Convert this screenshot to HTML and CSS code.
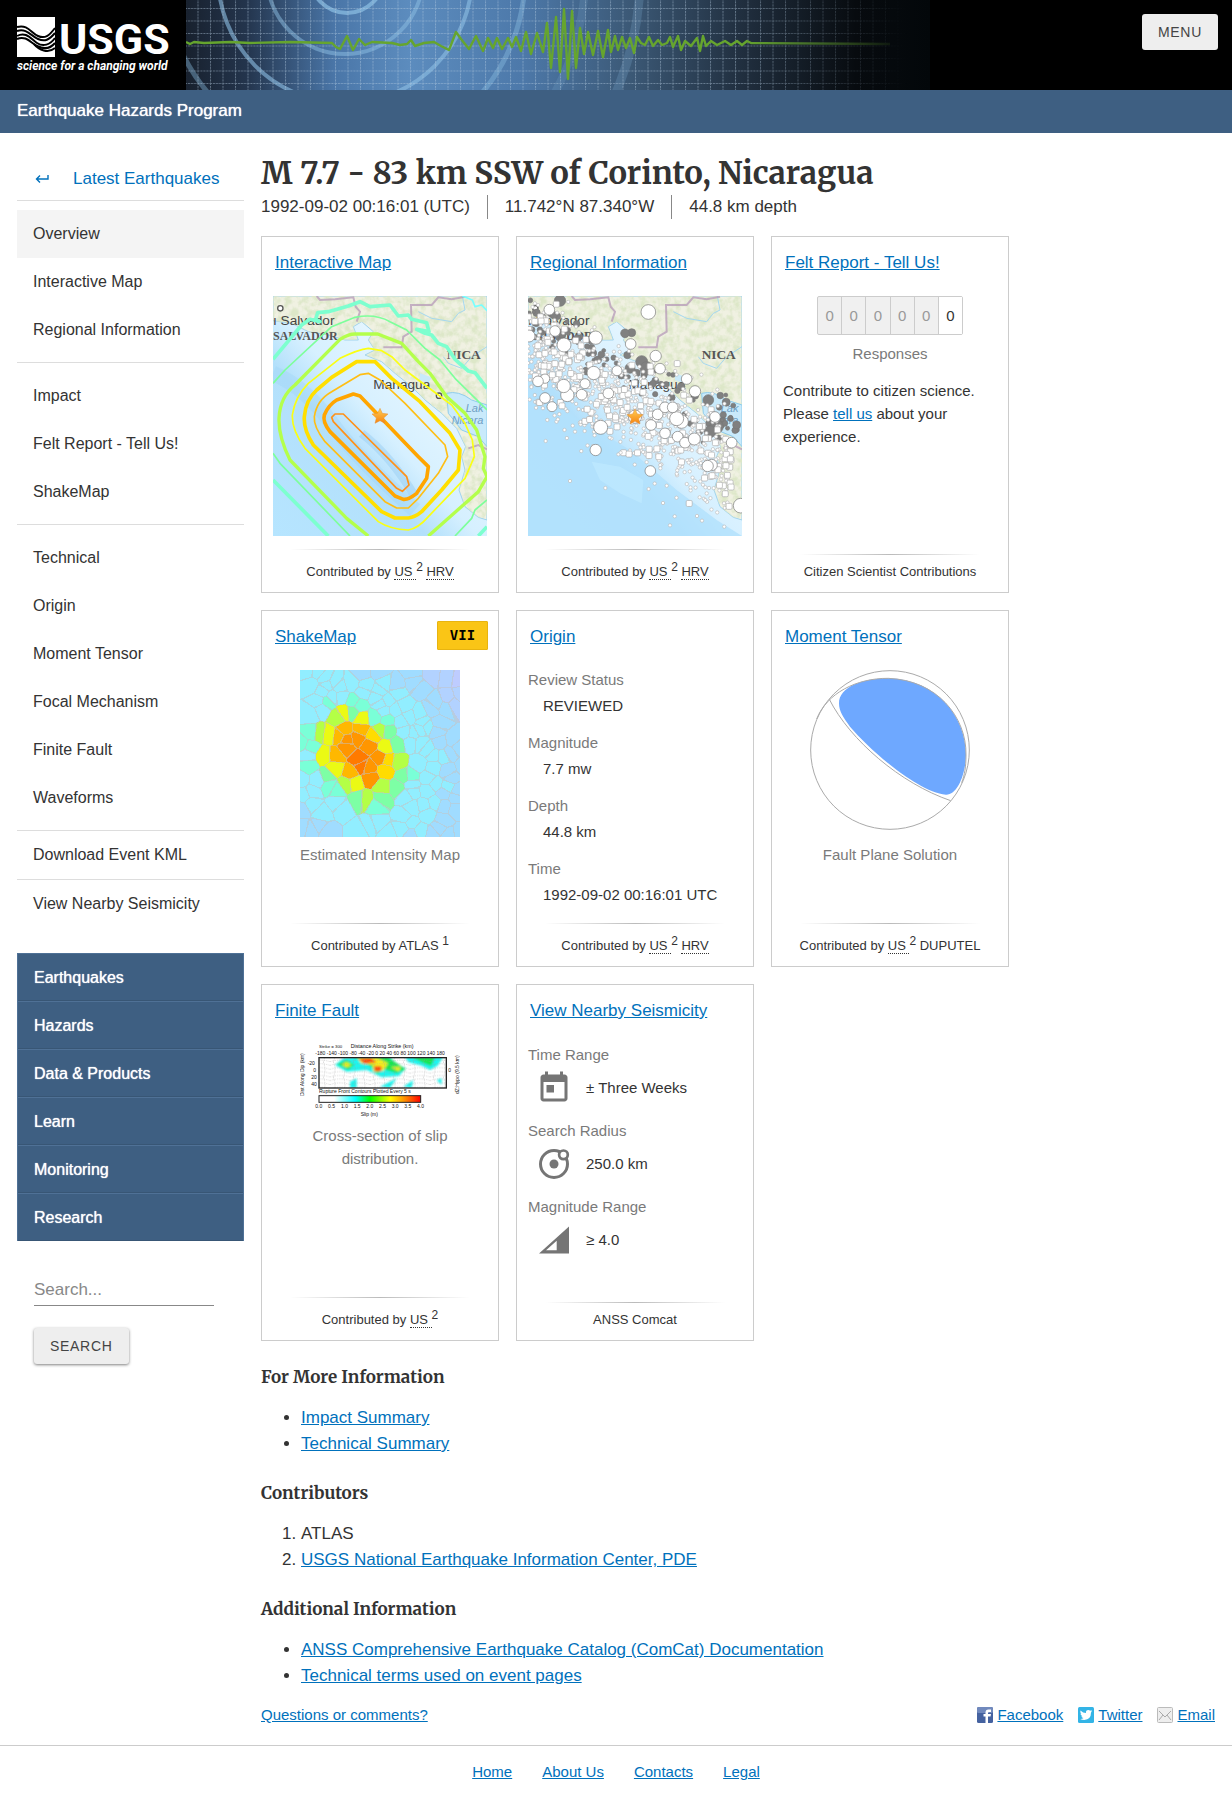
FILE: index.html
```html
<!DOCTYPE html>
<html lang="en">
<head>
    <meta charset="UTF-8">
    <meta name="viewport" content="width=device-width, initial-scale=1.0">
    <title>M 7.7 - 83 km SSW of Corinto, Nicaragua</title>
    <link rel="stylesheet" href="styles.css">
</head>
<body>
    <header class="site-header">
        <a class="logo" href="#" aria-label="USGS home">
            <svg width="186" height="90" viewBox="0 0 186 90">
                <rect x="17" y="17" width="38" height="40" fill="#fff"/>
                <g fill="none" stroke="#000" stroke-width="2">
                    <path d="M17 27C28 24 31 33 38 36S49 36 55 28"/>
                    <path d="M17 31C27 28 31 36 38 39S49 40 55 33"/>
                    <path d="M17 36C26 31 31 39 37 43S50 45 55 38"/>
                    <path d="M17 39C26 35 31 43 37 46S50 49 55 43"/>
                    <path d="M34 44C39 50 48 54 55 48"/>
                </g>
                <text class="logo-name" x="59" y="54">USGS</text>
                <text class="logo-tag" x="17" y="70">science for a changing world</text>
            </svg>
        </a>
        <svg class="banner" width="744" height="90" viewBox="186 0 744 90">
            <defs>
                <linearGradient id="sky">
                    <stop offset="0" stop-color="#18212e"/>
                    <stop offset=".08" stop-color="#23344c"/>
                    <stop offset=".2" stop-color="#4a76a8"/>
                    <stop offset=".3" stop-color="#5c8cbe"/>
                    <stop offset=".45" stop-color="#4d79aa"/>
                    <stop offset=".6" stop-color="#3b5875"/>
                    <stop offset=".75" stop-color="#202e3e"/>
                    <stop offset=".9" stop-color="#070b0f"/>
                    <stop offset="1" stop-color="#03070a"/>
                </linearGradient>
                <linearGradient id="fade">
                    <stop offset=".75" stop-color="#fff"/>
                    <stop offset=".97" stop-color="#000"/>
                </linearGradient>
                <mask id="fadeMask"><rect x="186" y="0" width="744" height="90" fill="url(#fade)"/></mask>
                <pattern id="gridLines" x="185" y="8" width="12.5" height="12.5" patternUnits="userSpaceOnUse">
                    <path d="M0 .5H12.5M.5 0V12.5" stroke="#b9cfe2" stroke-opacity=".45" stroke-dasharray="2 1"/>
                </pattern>
            </defs>
            <rect x="186" y="0" width="744" height="90" fill="url(#sky)"/>
            <g fill="none" stroke="#8dc0e4">
                <circle cx="347" cy="-24" r="37" stroke-width="4" opacity=".7"/>
                <circle cx="345" cy="-24" r="78" stroke-width="4" opacity=".5"/>
                <circle cx="345" cy="-24" r="127" stroke-width="4" opacity=".6"/>
                <circle cx="345" cy="-24" r="180" stroke-width="5" opacity=".4"/>
                <circle cx="345" cy="-24" r="240" stroke-width="8" opacity=".15"/>
                <circle cx="345" cy="-24" r="295" stroke-width="9" opacity=".2"/>
            </g>
            <g mask="url(#fadeMask)">
                <rect x="186" y="0" width="744" height="90" fill="url(#gridLines)"/>
                <path d="M186 42L190 44L194 42L204 43L230 42L250 43L290 42L332 43L336 47L340 49L347 36L353 50L359 39L365 45L372 42L392 43L400 45L407 44L411 40L415 46L424 43L434 42L441 46L449 50L456 32L461 39L469 49L476 36L483 51L488 38L493 48L497 38L502 49L508 38L512 47L516 37L521 51L526 32L531 54L537 33L543 52L547 23L551 68L556 17L560 72L564 9L568 79L572 11L576 68L580 28L584 54L588 32L593 55L598 31L603 57L608 30L611 52L615 36L618 50L622 37L626 48L630 38L634 53L637 37L641 43L645 45L649 37L653 46L658 40L662 45L667 43L670 37L673 47L678 36L681 50L685 41L691 46L697 38L700 51L703 36L706 46L711 41L717 45L725 41L731 45L737 41L742 45L747 41L751 43L890 44" fill="none" stroke="#66a52e" stroke-width="2.4" stroke-linejoin="round"/>
            </g>
        </svg>
        <button class="btn menu-btn" type="button">MENU</button>
    </header>
    <div class="program-bar"><a href="#">Earthquake Hazards Program</a></div>

    <div class="layout">
        <aside class="sidebar">
            <a class="back-link" href="#">
                <svg width="14" height="10" viewBox="0 0 14 10" fill="none" stroke="#0071bc" stroke-width="1.4"><path d="M13 1V5H1.5M5 1.5L1.5 5L5 8.500"/></svg>
                Latest Earthquakes
            </a>
            <nav class="event-nav">
                <div class="nav-group">
                    <a class="current" href="#">Overview</a>
                    <a href="#">Interactive Map</a>
                    <a href="#">Regional Information</a>
                </div>
                <div class="nav-group">
                    <a href="#">Impact</a>
                    <a href="#">Felt Report - Tell Us!</a>
                    <a href="#">ShakeMap</a>
                </div>
                <div class="nav-group">
                    <a href="#">Technical</a>
                    <a href="#">Origin</a>
                    <a href="#">Moment Tensor</a>
                    <a href="#">Focal Mechanism</a>
                    <a href="#">Finite Fault</a>
                    <a href="#">Waveforms</a>
                </div>
                <a class="download" href="#">Download Event KML</a>
                <a href="#">View Nearby Seismicity</a>
            </nav>
            <nav class="site-nav">
                <a href="#">Earthquakes</a>
                <a href="#">Hazards</a>
                <a href="#">Data &amp; Products</a>
                <a href="#">Learn</a>
                <a href="#">Monitoring</a>
                <a href="#">Research</a>
            </nav>
            <form class="search">
                <input type="search" placeholder="Search..." aria-label="Search">
                <button class="btn" type="button">SEARCH</button>
            </form>
        </aside>

        <main class="content">
            <h1>M 7.7 - 83 km SSW of Corinto, Nicaragua</h1>
            <ul class="event-meta">
                <li>1992-09-02 00:16:01 (UTC)</li>
                <li>11.742°N 87.340°W</li>
                <li>44.8 km depth</li>
            </ul>

            <div class="cards">
                <section class="card">
                    <h2><a href="#">Interactive Map</a></h2>
                    <div class="card-body">
                        <svg class="map" viewBox="24 18 642 720">
                            <defs>
                                <linearGradient id="sea" x1="1" y1="0" x2="0" y2="1">
                                    <stop offset=".3" stop-color="#e6f6ff"/>
                                    <stop offset=".52" stop-color="#d6f0ff"/>
                                    <stop offset=".64" stop-color="#b3e0fb"/>
                                    <stop offset="1" stop-color="#b6e5ff"/>
                                </linearGradient>
                                <linearGradient id="starFill" x1="0" y1="0" x2="0" y2="1">
                                    <stop offset="0" stop-color="#ffcf55"/>
                                    <stop offset="1" stop-color="#f7820e"/>
                                </linearGradient>
                                <filter id="terrain" x="0" y="0" width="1" height="1">
                                    <feTurbulence type="fractalNoise" baseFrequency=".05" numOctaves="3" seed="4"/>
                                    <feColorMatrix values="0 0 0 0 .72  0 0 0 0 .8  0 0 0 0 .58  2.8 0 0 0 -1"/>
                                    <feComposite operator="in" in2="SourceGraphic"/>
                                </filter>
                                <path id="landShape" d="M24 18H666V690L640 682L600 650L582 600L600 540L590 500L602 470L575 415L530 370L480 330L440 290L390 250L350 215L300 195L330 180L310 150L325 125L290 95L265 110L280 150L240 150L190 135L130 125L80 100L24 92Z"/>
                                <g id="baseMap">
                                    <rect x="24" y="18" width="642" height="720" fill="url(#sea)"/>
                                    <use href="#landShape" fill="#f0f1e2" stroke="#9fd3ee" stroke-width="3"/>
                                    <use href="#landShape" fill="#f0f1e2" filter="url(#terrain)"/>
                                    <path d="M545 310Q580 300 620 330L666 345V470L640 440L590 420L550 370Z" fill="#c9eafb" stroke="#8fcdec" stroke-width="3"/>
                                    <path d="M465 250L500 262L490 280L465 270Z" fill="#c9eafb"/>
                                    <path d="M460 65L500 85L560 95L580 70L600 60L592 18M666 170L620 200L590 235L550 220L535 200" fill="none" stroke="#a5d8f0" stroke-width="3"/>
                                    <path d="M155 18L165 30L210 28L265 22L272 50L285 65L275 95M355 172H410L415 140L440 125L438 45L500 45L520 22L560 28L600 20M610 475L640 465L666 478" fill="none" stroke="#b59ab8" stroke-opacity=".75" stroke-width="6"/>
                                    <g fill="#fff" stroke="#555" stroke-width="4"><circle cx="46" cy="55" r="8"/><circle cx="522" cy="317" r="8"/></g>
                                    <g class="map-city">
                                        <text x="24" y="104">ı Salvador</text>
                                        <text x="325" y="298">Managua</text>
                                    </g>
                                    <g class="map-country">
                                        <text x="24" y="150" font-size="36">SALVADOR</text>
                                        <text x="545" y="206" font-size="40">NICA</text>
                                    </g>
                                    <g class="map-water">
                                        <text x="602" y="367">Lak</text>
                                        <text x="560" y="402">Nicara</text>
                                    </g>
                                </g>
                                <path id="star" d="M0-23L7-8L24-6L11 6L15 22L0 14L-15 22L-11 6L-24-6L-7-8Z" fill="url(#starFill)" stroke="#e0913a" stroke-width="1.500"/>
                            </defs>
                            <use href="#baseMap"/>
                            <path d="M24 250Q120 290 200 400T450 660" fill="none" stroke="#96cff5" stroke-width="46" opacity=".28"/>
                            <path d="M290 430Q380 500 450 620" fill="none" stroke="#7dbdec" stroke-width="26" opacity=".3"/>
                            <g fill="none" stroke-linejoin="round">
                                <path stroke="#7dffcf" stroke-width="11" d="M24 208L110 105L135 88L165 95L152 88L158 68L190 65L250 48L285 35L315 50L375 45L400 78L430 75L440 88L485 98L492 125L455 118L480 130L500 135L520 160L545 170L570 208L610 243L630 248L666 295M24 570L190 738M640 738L666 710"/>
                                <path stroke="#7dff9b" stroke-width="5" d="M24 280L60 240L200 110L270 82Q330 70 375 95L425 120L480 175L525 210L570 265L666 360M24 490L45 520L255 738M666 630L630 660L620 685L570 738"/>
                                <path stroke="#b4ff4b" stroke-width="10" d="M310 738L245 685L75 510Q40 440 42 385Q45 320 90 285L225 148Q250 132 270 132H338L410 160L460 215L495 250L545 320L600 370L635 420L660 500L655 535L666 560L640 605L490 738"/>
                                <path stroke="#faff14" stroke-width="5" d="M130 280L225 205Q280 178 310 175L350 182L380 200L420 240L500 300L560 345L600 400L622 450L628 500L600 565L490 680Q460 715 430 720Q375 718 340 695L120 475Q80 420 82 375Q90 320 130 280Z"/>
                                <path stroke="#ffdf00" stroke-width="11" d="M275 215H330L380 265L465 335L555 430L585 480L580 540L530 600L470 665Q450 682 430 684H390L350 665L145 465Q115 420 118 380Q122 330 155 300L200 262Z"/>
                                <path stroke="#ffbe14" stroke-width="5" d="M310 250L345 270L420 340L540 465L548 500L520 550L460 625L430 654H395L360 635L180 455Q145 410 148 380Q155 330 200 305L285 254Z"/>
                                <path stroke="#ffa500" stroke-width="11" d="M265 312L285 318L460 500L490 530L485 565L455 610Q430 630 415 628L390 618L195 425Q172 395 178 375Q190 345 215 330Z"/>
                                <path stroke="#ff9119" stroke-width="5" d="M210 372H235L425 560L432 585L412 604L395 595L205 395L200 382Z"/>
                                <path stroke="#7ff" stroke-width="5" d="M592 18L622 30L630 50L650 45L666 62"/>
                            </g>
                            <use href="#star" x="345" y="378"/>
                        </svg>
                    </div>
                    <footer>Contributed by <abbr title="USGS National Earthquake Information Center, PDE">US&nbsp;</abbr><sup>2</sup> <abbr title="Harvard">HRV</abbr></footer>
                </section>

                <section class="card">
                    <h2><a href="#">Regional Information</a></h2>
                    <div class="card-body">
                        <svg class="map" viewBox="24 18 642 720">
                            <use href="#baseMap"/>
                            <path d="M24 300L180 390L330 480L470 600L590 690L666 738H24Z" fill="#b2e1fd" opacity=".8"/>
                            <path d="M215 515L300 530L370 570L365 640L300 610L240 570Z" fill="#bfe9ff" opacity=".7"/>
                            <g id="quakes"></g>
                            <use href="#star" x="345" y="380"/>
                        </svg>
                    </div>
                    <footer>Contributed by <abbr title="USGS National Earthquake Information Center, PDE">US&nbsp;</abbr><sup>2</sup> <abbr title="Harvard">HRV</abbr></footer>
                </section>

                <section class="card">
                    <h2><a href="#">Felt Report - Tell Us!</a></h2>
                    <div class="card-body">
                        <div class="responses">
                            <span>0</span><span>0</span><span>0</span><span>0</span><span>0</span><span class="last">0</span>
                        </div>
                        <p class="caption">Responses</p>
                        <p class="invite">Contribute to citizen science. Please <a href="#">tell us</a> about your experience.</p>
                    </div>
                    <footer>Citizen Scientist Contributions</footer>
                </section>

                <section class="card">
                    <h2><a href="#">ShakeMap</a></h2>
                    <span class="mmi">VII</span>
                    <div class="card-body">
                        <canvas id="shakemap" class="thumb" width="160" height="167"></canvas>
                        <p class="caption">Estimated Intensity Map</p>
                    </div>
                    <footer>Contributed by ATLAS <sup>1</sup></footer>
                </section>

                <section class="card">
                    <h2><a href="#">Origin</a></h2>
                    <dl class="facts">
                        <dt>Review Status</dt>
                        <dd>REVIEWED</dd>
                        <dt>Magnitude</dt>
                        <dd>7.7 mw</dd>
                        <dt>Depth</dt>
                        <dd>44.8 km</dd>
                        <dt>Time</dt>
                        <dd>1992-09-02 00:16:01 UTC</dd>
                    </dl>
                    <footer>Contributed by <abbr title="USGS National Earthquake Information Center, PDE">US&nbsp;</abbr><sup>2</sup> <abbr title="Harvard">HRV</abbr></footer>
                </section>

                <section class="card">
                    <h2><a href="#">Moment Tensor</a></h2>
                    <div class="card-body">
                        <svg class="thumb" width="160" height="167" viewBox="930 210 480 501">
                            <path fill="#6ea8ff" d="M1017 310C1017 260 1090 234 1170 235C1310 240 1398 350 1398 465C1396 530 1370 585 1338 584C1250 575 1110 450 1050 380C1030 352 1017 335 1017 310Z"/>
                            <g fill="none" stroke="#aaa" stroke-width="3">
                                <circle cx="1170" cy="450" r="238"/>
                                <path d="M950 357C980 280 1070 234 1165 235C1310 240 1400 350 1398 465C1398 500 1394 525 1385 548M988 298C1050 420 1200 550 1352 602"/>
                            </g>
                        </svg>
                        <p class="caption">Fault Plane Solution</p>
                    </div>
                    <footer>Contributed by <abbr title="USGS National Earthquake Information Center, PDE">US&nbsp;</abbr><sup>2</sup> DUPUTEL</footer>
                </section>

                <section class="card">
                    <h2><a href="#">Finite Fault</a></h2>
                    <div class="card-body">
                        <svg class="thumb slip" width="160" height="74" viewBox="150 222 480 222">
                            <defs>
                                <linearGradient id="slipScale">
                                    <stop offset=".15" stop-color="#fff"/>
                                    <stop offset=".36" stop-color="#00ffff"/>
                                    <stop offset=".5" stop-color="#00ff00"/>
                                    <stop offset=".7" stop-color="#ffff00"/>
                                    <stop offset=".85" stop-color="#ff8800"/>
                                    <stop offset="1" stop-color="#ff0000"/>
                                </linearGradient>
                                <filter id="soft"><feGaussianBlur stdDeviation="3"/></filter>
                                <clipPath id="slipBox"><rect x="207" y="263" width="382" height="91"/></clipPath>
                                <pattern id="contours" width="60" height="46" patternUnits="userSpaceOnUse">
                                    <path d="M0 10Q30 0 60 10M0 22Q30 12 60 22M0 34Q30 24 60 34M0 45Q30 36 60 45M10 0Q20 23 10 46M40 0Q50 23 40 46" fill="none" stroke="#999" stroke-width="1" stroke-dasharray="4 3"/>
                                </pattern>
                            </defs>
                            <g clip-path="url(#slipBox)">
                                <g filter="url(#soft)">
                                    <path fill="#1ff5ee" d="M255 285L280 265L320 260H420L440 283L467 295L447 318L395 322L350 300L290 305ZM465 260H580L563 287L540 300L515 287L475 277ZM300 335L320 325V354H300ZM390 350L440 325L420 354ZM460 350L490 330L485 354ZM560 330L575 325V345Z"/>
                                    <path fill="#14e650" d="M262 283L290 270L312 285L295 299ZM312 260H412L467 298L440 310L400 297L382 312L363 290ZM485 261H555L543 288L515 277Z"/>
                                    <path fill="#f4ee1f" d="M276 284L290 276L304 286L290 292ZM322 262H378L414 280L400 302L370 306L368 284L333 280ZM422 292L452 291L447 304Z"/>
                                    <path fill="#ff4a08" d="M326 266L362 264L380 277L343 281ZM372 289H394V304H374Z"/>
                                </g>
                                <rect x="207" y="263" width="382" height="91" fill="url(#contours)"/>
                            </g>
                            <rect x="207" y="263" width="382" height="91" fill="none" stroke="#222" stroke-width="4"/>
                            <rect x="207" y="377" width="305" height="20" fill="url(#slipScale)" stroke="#222" stroke-width="3"/>
                            <text x="207" y="235" font-size="13">Strike = 300</text>
                            <text x="302" y="234" font-size="16">Distance Along Strike (km)</text>
                            <text x="196" y="255" font-size="15">-180 -140 -100 -80 -40 -20 0 20 40 60 80 100 120 140 180</text>
                            <text x="207" y="369" font-size="15">Rupture Front Contours Plotted Every 5 s</text>
                            <g font-size="15">
                                <text x="173" y="285">-20</text><text x="190" y="305">0</text>
                                <text x="184" y="326">20</text><text x="184" y="347">40</text><text x="595" y="305">0</text>
                                <text x="196" y="415">0.0</text><text x="234" y="415">0.5</text><text x="273" y="415">1.0</text>
                                <text x="311" y="415">1.5</text><text x="349" y="415">2.0</text><text x="387" y="415">2.5</text>
                                <text x="425" y="415">3.0</text><text x="463" y="415">3.5</text><text x="501" y="415">4.0</text>
                                <text x="332" y="438">Slip (m)</text>
                                <text transform="translate(162 378) rotate(-90)">Dist Along Dip (km)</text>
                                <text transform="translate(627 372) rotate(-90)">dZ:Hypo (9.5 km)</text>
                            </g>
                        </svg>
                        <p class="caption">Cross-section of slip distribution.</p>
                    </div>
                    <footer>Contributed by <abbr title="USGS National Earthquake Information Center, PDE">US&nbsp;</abbr><sup>2</sup></footer>
                </section>

                <section class="card">
                    <h2><a href="#">View Nearby Seismicity</a></h2>
                    <dl class="facts icon-facts">
                        <dt>Time Range</dt>
                        <dd>
                            <svg width="36" height="36" viewBox="0 0 24 24" fill="#757575"><path d="M19 3h-1V1h-2v2H8V1H6v2H5c-1.110 0-1.990.9-1.990 2L3 19c0 1.100.89 2 2 2h14c1.100 0 2-.9 2-2V5c0-1.100-.9-2-2-2zm0 16H5V8h14v11zM7 10h5v5H7z"/></svg>
                            ± Three Weeks
                        </dd>
                        <dt>Search Radius</dt>
                        <dd>
                            <svg width="36" height="36" viewBox="0 0 24 24" fill="none" stroke="#757575" stroke-width="2"><circle cx="12" cy="12" r="9"/><circle cx="12" cy="12" r="3" fill="#757575" stroke="none"/><circle cx="18.300" cy="5.900" r="2.900" fill="#fff" stroke-width="1.800"/></svg>
                            250.0 km
                        </dd>
                        <dt>Magnitude Range</dt>
                        <dd>
                            <svg width="36" height="36" viewBox="0 0 24 24" fill="#757575"><path fill-rule="evenodd" d="M2 21H22V3ZM6.700 18.800H13.800V12.500Z"/></svg>
                            ≥ 4.0
                        </dd>
                    </dl>
                    <footer>ANSS Comcat</footer>
                </section>
            </div>

            <h3>For More Information</h3>
            <ul class="links">
                <li><a href="#">Impact Summary</a></li>
                <li><a href="#">Technical Summary</a></li>
            </ul>
            <h3>Contributors</h3>
            <ol class="links">
                <li>ATLAS</li>
                <li><a href="#">USGS National Earthquake Information Center, PDE</a></li>
            </ol>
            <h3>Additional Information</h3>
            <ul class="links">
                <li><a href="#">ANSS Comprehensive Earthquake Catalog (ComCat) Documentation</a></li>
                <li><a href="#">Technical terms used on event pages</a></li>
            </ul>

            <div class="page-foot">
                <a href="#">Questions or comments?</a>
                <div class="social">
                    <a href="#">
                        <svg width="16" height="16" viewBox="0 0 16 16"><rect width="16" height="16" rx="1.500" fill="#4562a0"/><rect width="16" height="6" rx="1.500" fill="#7189bd"/><path fill="#fff" d="M8.500 16V9.500H6.500V7H8.500V5.500Q8.500 2.500 11.500 2.500H14V5H12Q11 5 11 6V7H14L13.500 9.500H11V16Z"/></svg>
                        <span>Facebook</span>
                    </a>
                    <a href="#">
                        <svg width="16" height="16" viewBox="0 0 16 16"><rect width="16" height="16" rx="1.500" fill="#33b4e6"/><path fill="#fff" d="M2.500 3.500Q5 6 8 6Q7.600 3 10.300 2.900Q11.500 2.900 12.200 3.700L13.800 3.100L13.100 4.500L14.200 4.300L13 5.600Q13 12.800 6.300 13Q4 13 2.200 11.900Q4.200 12 5.500 10.900Q3.800 10.700 3.300 9.200H4.400Q2.400 8.400 2.400 6.500L3.400 6.800Q1.700 5.400 2.500 3.500Z"/></svg>
                        <span>Twitter</span>
                    </a>
                    <a href="#">
                        <svg width="16" height="16" viewBox="0 0 16 16"><rect x=".5" y=".5" width="15" height="15" rx="1" fill="#eee" stroke="#bbb"/><path fill="none" stroke="#aaa" d="M2 4L8 10L14 4M2 13L6 8M14 13L10 8"/></svg>
                        <span>Email</span>
                    </a>
                </div>
            </div>
        </main>
    </div>

    <footer class="site-footer">
        <a href="#">Home</a>
        <a href="#">About Us</a>
        <a href="#">Contacts</a>
        <a href="#">Legal</a>
    </footer>
    <script src="script.js"></script>
</body>
</html>
```

FILE: styles.css
```css
* {
    box-sizing: border-box;
}
body {
    margin: 0;
    font-family: "Liberation Sans", Arial, sans-serif;
    font-size: 17px;
    line-height: 26px;
    color: #333;
    background: #fff;
}
a {
    color: #0071bc;
}
h1, h2, h3, p, ul, ol, dl, dd {
    margin: 0;
}
svg, canvas {
    display: block;
}

/* header */
.site-header {
    display: flex;
    align-items: flex-start;
    height: 90px;
    background: #000;
    overflow: hidden;
}
.logo, .banner {
    flex: none;
}
.logo text {
    fill: #fff;
    font-family: Roboto, "Liberation Sans", sans-serif;
    font-weight: bold;
}
.logo .logo-name {
    font-size: 43px;
}
.logo .logo-tag {
    font-size: 12px;
    font-style: italic;
}
.btn {
    height: 36px;
    padding: 0 16px;
    border: 0;
    border-radius: 3px;
    background: #eee;
    color: #444;
    font-family: inherit;
    font-size: 14px;
    letter-spacing: .05em;
}
.menu-btn {
    margin: 14px 14px 0 auto;
}
.program-bar {
    height: 43px;
    padding: 0 17px;
    line-height: 41px;
    background: #3e5f82;
}
.program-bar a {
    color: #fff;
    text-decoration: none;
    text-shadow: 0 0 1px #fff;
}

.layout {
    display: grid;
    grid-template-columns: 227px minmax(0, 1fr);
    gap: 17px;
    padding: 0 17px;
}

/* sidebar */
.sidebar {
    padding-top: 23px;
}
.sidebar a {
    text-decoration: none;
}
.back-link {
    display: flex;
    align-items: center;
    gap: 24px;
    height: 45px;
    padding: 2px 0 0 18px;
    border-bottom: 1px solid #ddd;
}
.event-nav a {
    display: block;
    height: 48px;
    padding-left: 16px;
    line-height: 48px;
    font-size: 16px;
    color: #333;
}
.event-nav .current {
    background: #f4f4f4;
}
.nav-group {
    padding: 9px 0 8px;
    border-bottom: 1px solid #ddd;
}
.event-nav .download {
    height: 49px;
    border-bottom: 1px solid #ddd;
}
.site-nav {
    margin-top: 25px;
    border: solid #4f7196;
    border-width: 0 1px;
    background: #3e5f82;
}
.site-nav a {
    display: block;
    height: 48px;
    padding-left: 16px;
    line-height: 48px;
    border-top: 1px solid #4f7196;
    border-bottom: 1px solid #385675;
    font-size: 16px;
    color: #fff;
    text-shadow: 0 0 1px #fff;
}
.search {
    padding: 33px 30px 0 17px;
}
.search input {
    display: block;
    width: 100%;
    height: 32px;
    margin-bottom: 22px;
    padding: 0;
    border: 0;
    border-bottom: 1px solid #888;
    font-family: inherit;
    font-size: 17px;
    background: none;
}
.search input::placeholder {
    color: #888;
}
.search .btn {
    box-shadow: 0 1px 3px rgba(0, 0, 0, .5);
}

/* main column */
.content {
    padding-top: 20px;
}
h1, h3 {
    font-family: Merriweather, "Liberation Serif", serif;
    font-weight: bold;
}
h1 {
    font-size: 31px;
    line-height: 40px;
}
h3 {
    margin: 24px 0 16px;
    font-size: 17px;
    line-height: 24px;
}
.event-meta {
    display: flex;
    flex-wrap: wrap;
    margin: 2px 0 17px;
    padding: 0;
    list-style: none;
    line-height: 24px;
}
.event-meta li + li {
    margin-left: 17px;
    padding-left: 17px;
    border-left: 1px solid #888;
}

/* cards */
.cards {
    display: grid;
    grid-template-columns: repeat(auto-fill, 238px);
    gap: 17px;
}
.card {
    display: flex;
    flex-direction: column;
    position: relative;
    min-height: 357px;
    padding: 0 11px 10px;
    border: 1px solid #ccc;
    font-size: 15px;
    line-height: 23px;
}
.card h2 {
    height: 56px;
    padding: 14px 2px 0;
    font-size: 17px;
    line-height: 24px;
    font-weight: normal;
}
.card-body {
    padding-top: 3px;
}
.map {
    width: 100%;
    height: 240px;
}
.map-city {
    font-size: 41px;
    fill: #444;
}
.map-country {
    font-family: "Liberation Serif", serif;
    font-weight: bold;
    fill: #555;
}
.map-water {
    font-size: 33px;
    font-style: italic;
    fill: #6f9fc4;
}
.thumb {
    margin: 0 auto 6px;
}
.slip text {
    fill: #111;
}
.caption {
    padding: 0 24px;
    text-align: center;
    color: #7a7a7a;
}
.card footer {
    margin-top: auto;
    padding-top: 8px;
    font-size: 13px;
    line-height: 20px;
    text-align: center;
    background: linear-gradient(to right, transparent 8%, #bbb 50%, transparent 92%) no-repeat top / 100% 1px;
}
.card sup {
    font-size: 12px;
}
abbr {
    text-decoration: none;
    border-bottom: 1px dotted #333;
}
.responses {
    display: flex;
    width: 146px;
    height: 39px;
    margin: 0 auto 7px;
    border: 1px solid #ccc;
    border-radius: 2px;
    line-height: 37px;
    text-align: center;
    color: #999;
    background: #f0f0f0;
}
.responses span {
    flex: 1;
    border-right: 1px solid #ccc;
}
.responses .last {
    border: 0;
    color: #333;
    background: #fff;
}
.invite {
    margin-top: 14px;
}
.mmi {
    position: absolute;
    top: 10px;
    right: 10px;
    width: 51px;
    height: 29px;
    border: 1px solid #e8b410;
    border-radius: 1px;
    background: #fac516;
    color: #000;
    font: bold 14px/27px "DejaVu Sans Mono", monospace;
    text-align: center;
}
.facts {
    line-height: 26px;
}
.facts dt {
    color: #7a7a7a;
}
.facts dd {
    margin: 0 0 11px 15px;
}
.icon-facts {
    padding-top: 1px;
}
.icon-facts dd {
    display: flex;
    align-items: center;
    gap: 14px;
    height: 39px;
    margin-left: 8px;
}

.links {
    padding-left: 40px;
}
.page-foot {
    display: flex;
    justify-content: space-between;
    margin: 14px 0 18px;
    font-size: 15px;
    line-height: 24px;
}
.social {
    display: flex;
    gap: 15px;
}
.social a {
    display: flex;
    align-items: center;
    gap: 4px;
}
.site-footer {
    display: flex;
    justify-content: center;
    gap: 30px;
    padding: 14px 0 28px;
    border-top: 1px solid #ccc;
    font-size: 15px;
    line-height: 24px;
}
```

FILE: script.js
```js
// small repeatable random generator so the thumbnails never change
let seed = 19920902;
function rand() {
    seed = (seed * 1103515245 + 12345) % 2147483648;
    return seed / 2147483648;
}
function spread() {
    return rand() + rand() + rand() - 1.5;
}

// past earthquakes on the regional map
function drawQuakes() {
    let out = "";
    const dot = (x, y, r, fill, stroke) => {
        out += `<circle cx="${x}" cy="${y}" r="${r}" fill="${fill}" stroke="${stroke}" stroke-width="2"/>`;
    };
    for (let i = 0; i < 110; i++) {
        const x = 24 + rand() * 630;
        dot(x, 95 + (x - 24) * 0.52 + spread() * 80, 5 + rand() * 7, "#808080", "#777");
    }
    [[120, 32, 17], [335, 128, 12], [365, 215, 18], [380, 235, 20], [330, 235, 15], [315, 130, 13], [565, 330, 16], [590, 410, 20], [570, 425, 18], [650, 405, 12]]
        .forEach(q => dot(q[0], q[1], q[2], "#808080", "#777"));
    for (let i = 0; i < 760; i++) {
        const x = 24 + Math.pow(rand(), 1.1) * 600;
        dot(x, 185 + (x - 24) * 0.55 + spread() * 160, 5, "#fff", "#bbb");
    }
    for (let i = 0; i < 190; i++) {
        const x = 24 + Math.pow(rand(), 1.2) * 610;
        const y = 170 + (x - 24) * 0.55 + spread() * 150;
        out += `<rect x="${x - 9}" y="${y - 9}" width="18" height="18" rx="4" fill="#fff" stroke="#aaa" stroke-width="2"/>`;
    }
    const big = [
        [385, 66, 22], [227, 143, 20], [132, 165, 21], [88, 59, 16], [105, 123, 16], [332, 162, 16],
        [221, 249, 20], [291, 242, 15], [142, 315, 20], [131, 288, 20], [75, 266, 14], [54, 274, 16],
        [75, 324, 16], [96, 350, 15], [185, 314, 16], [195, 281, 15], [265, 310, 16], [420, 236, 16],
        [407, 198, 17], [500, 267, 16], [525, 304, 17], [585, 381, 16], [242, 412, 21], [227, 480, 17],
        [413, 373, 16], [485, 395, 20], [470, 386, 21], [393, 405, 16], [435, 352, 16], [458, 352, 16],
        [435, 430, 16], [473, 440, 16], [495, 458, 16], [523, 447, 18], [635, 458, 16], [575, 525, 17],
        [563, 528, 17], [391, 543, 16], [345, 380, 20], [662, 647, 22], [27, 138, 18]
    ];
    big.forEach(q => dot(q[0], q[1], q[2], "#fff", "#777"));
    [[77, 453], [150, 573], [256, 594], [386, 597], [429, 639], [464, 679], [531, 678], [546, 692], [450, 706], [165, 425], [302, 488]]
        .forEach(q => dot(q[0], q[1], 5, "#fff", "#bbb"));
    document.getElementById("quakes").innerHTML = out;
}

// intensity cells: every pixel takes the colour of its nearest cell centre
function drawShakemap() {
    const canvas = document.getElementById("shakemap");
    const ctx = canvas.getContext("2d");
    const w = canvas.width, h = canvas.height;
    const scale = [
        [0.3, [255, 122, 0]], [0.48, [255, 150, 0]], [0.64, [255, 184, 0]], [0.76, [255, 220, 0]],
        [0.88, [235, 250, 20]], [1.02, [180, 255, 70]], [1.16, [125, 255, 165]], [1.3, [122, 255, 215]],
        [2.1, [145, 238, 255]], [2.8, [160, 220, 255]], [3.5, [178, 210, 255]], [9, [190, 204, 255]]
    ];
    const cells = [];
    for (let i = 0; i < 300; i++) {
        const near = i < 80;
        const x = near ? 64 + spread() * 75 : rand() * w;
        const y = near ? 84 + spread() * 75 : rand() * h;
        if (cells.some(c => Math.hypot(c.x - x, c.y - y) < 7)) continue;
        const dx = x - 59, dy = y - 84;
        const along = (dx + dy) * 0.707, across = (dx - dy) * 0.707;
        const d = Math.hypot(along / 48, across / 35) + spread() * 0.12;
        cells.push({ x: x, y: y, color: scale.find(s => d < s[0])[1] });
    }
    const img = ctx.createImageData(w, h);
    for (let y = 0; y < h; y++) {
        for (let x = 0; x < w; x++) {
            let best = 1e9, next = 1e9, color;
            cells.forEach(c => {
                const d = Math.hypot(c.x - x, c.y - y);
                if (d < best) {
                    next = best;
                    best = d;
                    color = c.color;
                } else if (d < next) {
                    next = d;
                }
            });
            const edge = next - best < 1 ? 0.5 : 0;
            const p = (y * w + x) * 4;
            for (let k = 0; k < 3; k++) {
                img.data[p + k] = color[k] * (1 - edge) + 195 * edge;
            }
            img.data[p + 3] = 255;
        }
    }
    ctx.putImageData(img, 0, 0);
}

drawQuakes();
drawShakemap();
```
